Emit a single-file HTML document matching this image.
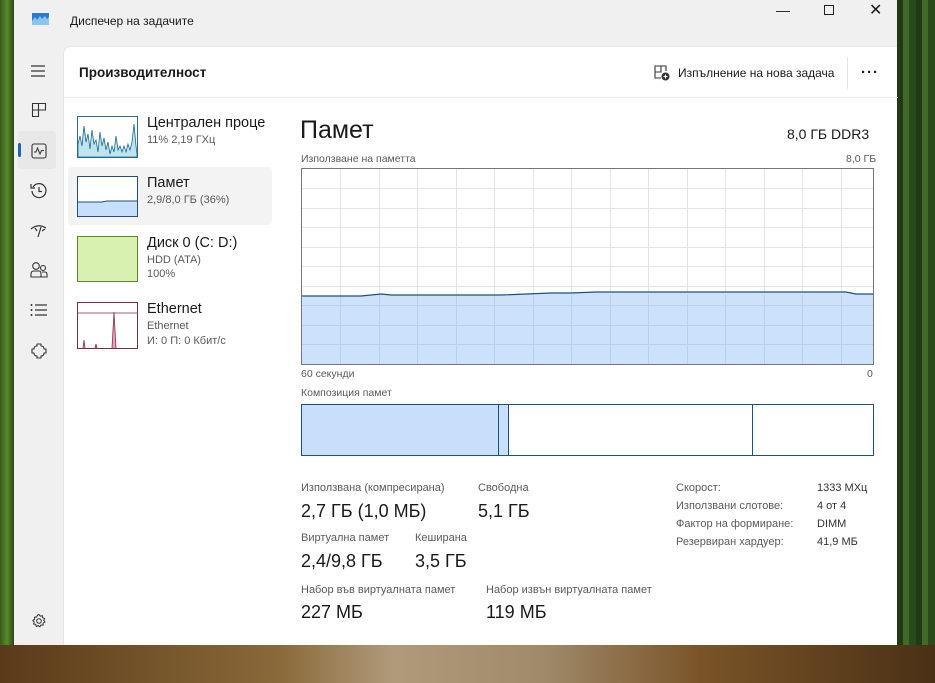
<!DOCTYPE html>
<html><head><meta charset="utf-8"><style>
*{margin:0;padding:0;box-sizing:border-box}
body{width:935px;height:683px;overflow:hidden;position:relative;font-family:"Segoe UI","Liberation Sans","DejaVu Sans",sans-serif;color:#1a1a1a;
background:linear-gradient(180deg,#2f4a1c 0%,#3d5a22 60%,#5a4320 85%,#7a5a30 100%)}
.bgr{position:absolute;left:897px;top:0;width:38px;height:683px;background:repeating-linear-gradient(90deg,#1f3a15 0 6px,#3f6a28 6px 12px,#2a4a1a 12px 19px)}
.bgl{position:absolute;left:0;top:0;width:14px;height:683px;background:linear-gradient(90deg,#355a1f,#5a8a2a,#2b4a18)}
.bgb{position:absolute;left:0;top:645px;width:935px;height:38px;background:linear-gradient(90deg,#5a3a18 0%,#8a6a3a 30%,#b09a7a 42%,#a08a6a 58%,#7a5428 75%,#4a3015 100%)}
.win{position:absolute;left:14px;top:0;width:883px;height:645px;background:#f0f0f0}
.t{position:absolute;white-space:nowrap}
.card{position:absolute;left:49px;top:46px;width:834px;height:599px;background:#fff;border-top-left-radius:8px;border:1px solid #e5e5e5;border-right:none;border-bottom:none}
.nav svg{position:absolute}
.s{font-size:11px;color:#5a5a5a}
.b{font-size:18px;color:#1a1a1a}
.r{font-size:11px;color:#333}
</style></head><body>
<div class="bgl"></div><div class="bgr"></div><div class="bgb"></div>
<div class="win">
 <svg style="position:absolute;left:18px;top:13px" width="17" height="12"><rect width="17" height="12" fill="#2b7ad0"/><path d="M0 8 L3 4 L5 7 L8 3 L10 6 L13 3 L15 6 L17 4 V12 H0Z" fill="#8cc4f0"/></svg>
 <div class="t" style="left:56px;top:14px;font-size:12px">Диспечер на задачите</div>
 <div class="t" style="left:762px;top:2px;font-size:14px">&#8212;</div>
 <div style="position:absolute;left:810px;top:5px;width:10px;height:10px;border:1px solid #222"></div>
 <div class="t" style="left:855px;top:0px;font-size:16px;font-weight:300">✕</div>
 <div class="nav">
  <svg style="left:16px;top:64px" width="16" height="14"><path d="M1 2H15M1 7H15M1 12H15" stroke="#333" stroke-width="1.2"/></svg>
  <svg style="left:17px;top:102px" width="16" height="16"><path d="M1.5 1.5H7.5V14.5H1.5ZM1.5 8H14.5V1.5H7.5M7.5 8V14.5" fill="none" stroke="#333" stroke-width="1.1"/></svg>
  <div style="position:absolute;left:4px;top:131px;width:38px;height:38px;background:#e8e8e8;border-radius:4px"></div>
  <div style="position:absolute;left:4px;top:143px;width:3px;height:14px;background:#1b65b5;border-radius:2px"></div>
  <svg style="left:17px;top:143px" width="16" height="16"><rect x="1" y="1" width="14" height="14" rx="2" fill="none" stroke="#333" stroke-width="1.1"/><path d="M3 9H5L6.5 5L9 11L10.5 7.5H13" fill="none" stroke="#333" stroke-width="1"/></svg>
  <svg style="left:16px;top:182px" width="18" height="18"><path d="M3 5A7 7 0 1 1 2 9" fill="none" stroke="#333" stroke-width="1.2"/><path d="M1 2V6H5" fill="none" stroke="#333" stroke-width="1.2"/><path d="M9 5V9.5H12" fill="none" stroke="#333" stroke-width="1.2"/></svg>
  <svg style="left:16px;top:222px" width="18" height="16"><path d="M1 7Q8 1 16 6M8 15L11 5M5 6L7 9M12 9L15 7" fill="none" stroke="#333" stroke-width="1.2"/></svg>
  <svg style="left:16px;top:261px" width="18" height="18"><circle cx="6" cy="5" r="3.3" fill="none" stroke="#333" stroke-width="1.1"/><circle cx="13" cy="7" r="2.5" fill="none" stroke="#333" stroke-width="1.1"/><path d="M1 16V13Q1 10 4 10H9Q11 10 11 13V16ZM12 11H15Q17 11 17 13.5V16H11" fill="none" stroke="#333" stroke-width="1.1"/></svg>
  <svg style="left:16px;top:303px" width="18" height="14"><path d="M5 2H17M5 7H17M5 12H17" stroke="#333" stroke-width="1.2"/><circle cx="1.5" cy="2" r="1" fill="#333"/><circle cx="1.5" cy="7" r="1" fill="#333"/><circle cx="1.5" cy="12" r="1" fill="#333"/></svg>
  <svg style="left:16px;top:342px" width="18" height="18"><path d="M7 2H11V4Q14 4 14 7H16V11H14Q14 14 11 14V16H7V14Q4 14 4 11H2V7H4Q4 4 7 4Z" fill="none" stroke="#333" stroke-width="1.1" stroke-linejoin="round"/></svg>
  <svg style="left:17px;top:613px" width="16" height="16"><circle cx="8" cy="8" r="2.3" fill="none" stroke="#333" stroke-width="1"/><path d="M8 1.5L9.3 3.2 11.3 2.6 11.6 4.7 13.6 5.4 12.8 7.4 14 9 12.2 10 12.1 12.1 10 12 8.9 13.8 7.2 12.6 5.3 13.5 4.7 11.4 2.6 11 3.2 9 1.8 7.4 3.6 6.3 3.5 4.2 5.6 4 6.5 2.1Z" fill="none" stroke="#333" stroke-width="1"/></svg>
 </div>
 <div class="card">
  <div class="t" style="left:15px;top:18px;font-size:13.5px;font-weight:bold;color:#1a1a1a">Производителност</div>
  <svg style="position:absolute;left:590px;top:18px" width="16" height="16"><path d="M1 1H7V7H1ZM7 1H12V6M1 7V13H7" fill="none" stroke="#333" stroke-width="1.1"/><circle cx="11.5" cy="11.5" r="4" fill="#333"/><path d="M11.5 9.5V13.5M9.5 11.5H13.5" stroke="#fff" stroke-width="1.1"/></svg>
  <div class="t" style="left:614px;top:19px;font-size:12px;color:#1a1a1a">Изпълнение на нова задача</div>
  <div style="position:absolute;left:783px;top:10px;width:1px;height:32px;background:#e5e5e5"></div>
  <div class="t" style="left:797px;top:17px;font-size:15px;font-weight:bold;letter-spacing:1px">···</div>
  <div style="position:absolute;left:0;top:50px;width:834px;height:1px;background:#ebebeb"></div>
  <svg style="position:absolute;left:13px;top:69px" width="61" height="42"><rect x=".5" y=".5" width="60" height="41" fill="#fff" stroke="#2a6f8a"/><path d="M1 41V28L3 20 5 30 7 10 9 26 11 18 13 33 15 14 17 28 19 24 21 36 23 16 25 30 27 22 29 34 31 26 33 38 35 30 37 36 39 20 41 34 43 30 45 36 47 30 49 36 51 28 53 34 55 26 57 8 59 30 60 38V41Z" fill="#bfe3ef" stroke="#1c6a8c" stroke-width=".8"/></svg>
  <div class="t" style="left:83px;top:68px;font-size:14.5px">Централен проце</div>
  <div class="t s" style="left:83px;top:87px">11% 2,19 ГХц</div>
  <div style="position:absolute;left:4px;top:120px;width:204px;height:58px;background:#f3f3f3;border-radius:4px"></div>
  <svg style="position:absolute;left:13px;top:129px" width="61" height="41"><rect x=".5" y=".5" width="60" height="40" fill="#fff" stroke="#1f4f7a"/><path d="M1 26H25L30 25H60V40H1Z" fill="#c7dffa"/><path d="M1 26H25L30 25H60" fill="none" stroke="#1f4f7a"/></svg>
  <div class="t" style="left:83px;top:128px;font-size:14.5px">Памет</div>
  <div class="t s" style="left:83px;top:147px">2,9/8,0 ГБ (36%)</div>
  <div style="position:absolute;left:13px;top:189px;width:61px;height:46px;background:#d8f0b0;border:1px solid #5a8a2a"></div>
  <div class="t" style="left:83px;top:188px;font-size:14.5px">Диск 0 (C: D:)</div>
  <div class="t s" style="left:83px;top:207px">HDD (ATA)</div>
  <div class="t s" style="left:83px;top:221px">100%</div>
  <svg style="position:absolute;left:13px;top:255px" width="61" height="47"><rect x=".5" y=".5" width="60" height="46" fill="#fff" stroke="#7a2a4a"/><path d="M1 11H60" stroke="#8a2a52" stroke-width=".8"/><path d="M6 46L7 38 8 46M18 46L19 42 20 46M35 46L37 10 39 46" fill="#e8a0b8" stroke="#8a2a52" stroke-width=".8"/></svg>
  <div class="t" style="left:83px;top:254px;font-size:14.5px">Ethernet</div>
  <div class="t s" style="left:83px;top:273px">Ethernet</div>
  <div class="t s" style="left:83px;top:288px">И: 0 П: 0 Кбит/с</div>
  <div class="t" style="left:236px;top:69px;font-size:25px;font-weight:300">Памет</div>
  <div class="t" style="left:723px;top:79px;font-size:14px">8,0 ГБ DDR3</div>
  <div class="t s" style="left:237px;top:106px;font-size:10.5px">Използване на паметта</div>
  <div class="t s" style="left:782px;top:106px;font-size:10.5px">8,0 ГБ</div>
  <svg style="position:absolute;left:237px;top:121px" width="573" height="197">
   <rect x=".5" y=".5" width="572" height="196" fill="#fff"/>
   <g stroke="#e4e4e4" stroke-width="1">
    <path d="M39.5 0V197M78.5 0V197M116.5 0V197M155.5 0V197M193.5 0V197M232.5 0V197M270.5 0V197M309.5 0V197M347.5 0V197M386.5 0V197M424.5 0V197M463.5 0V197M501.5 0V197M540.5 0V197"/>
    <path d="M0 20.5H573M0 40.5H573M0 59.5H573M0 79.5H573M0 98.5H573M0 118.5H573M0 137.5H573M0 157.5H573M0 176.5H573"/>
   </g>
   <path d="M0 128H60L80 126L90 127H200L250 125H270L295 124H545L555 126H573V197H0Z" fill="#c7dffa" fill-opacity=".9"/>
   <g stroke="#b8d0ec" stroke-width="1"><path d="M39.5 127V197M78.5 127V197M116.5 127V197M155.5 127V197M193.5 127V197M232.5 127V197M270.5 127V197M309.5 127V197M347.5 127V197M386.5 127V197M424.5 127V197M463.5 127V197M501.5 127V197M540.5 127V197M0 137.5H573M0 157.5H573M0 176.5H573"/></g>
   <path d="M0 128H60L80 126L90 127H200L250 125H270L295 124H545L555 126H573" fill="none" stroke="#1f4f7a" stroke-width="1.2"/>
   <rect x=".5" y=".5" width="572" height="196" fill="none" stroke="#777"/>
  </svg>
  <div class="t s" style="left:237px;top:321px;font-size:10.5px">60 секунди</div>
  <div class="t s" style="left:803px;top:321px;font-size:10.5px">0</div>
  <div class="t s" style="left:237px;top:340px;font-size:10.5px">Композиция памет</div>
  <svg style="position:absolute;left:237px;top:357px" width="573" height="53">
   <rect x=".5" y=".5" width="572" height="51" fill="#fff" stroke="#1f4f7a"/>
   <rect x=".5" y=".5" width="197" height="51" fill="#c7dffa" stroke="#1f4f7a"/>
   <rect x="197.5" y=".5" width="10" height="51" fill="#c7dffa" stroke="#1f4f7a"/>
   <path d="M451.5 0V52" stroke="#1f4f7a"/>
  </svg>
  <div class="t s" style="left:237px;top:435px">Използвана (компресирана)</div>
  <div class="t b" style="left:237px;top:454px">2,7 ГБ (1,0 МБ)</div>
  <div class="t s" style="left:414px;top:435px">Свободна</div>
  <div class="t b" style="left:414px;top:454px">5,1 ГБ</div>
  <div class="t s" style="left:237px;top:485px">Виртуална памет</div>
  <div class="t b" style="left:237px;top:504px">2,4/9,8 ГБ</div>
  <div class="t s" style="left:351px;top:485px">Кеширана</div>
  <div class="t b" style="left:351px;top:504px">3,5 ГБ</div>
  <div class="t s" style="left:237px;top:537px">Набор във виртуалната памет</div>
  <div class="t b" style="left:237px;top:555px">227 МБ</div>
  <div class="t s" style="left:422px;top:537px">Набор извън виртуалната памет</div>
  <div class="t b" style="left:422px;top:555px">119 МБ</div>
  <div class="t s" style="left:612px;top:435px">Скорост:</div>
  <div class="t s" style="left:612px;top:453px">Използвани слотове:</div>
  <div class="t s" style="left:612px;top:471px">Фактор на формиране:</div>
  <div class="t s" style="left:612px;top:489px">Резервиран хардуер:</div>
  <div class="t r" style="left:753px;top:435px">1333 MXц</div>
  <div class="t r" style="left:753px;top:453px">4 от 4</div>
  <div class="t r" style="left:753px;top:471px">DIMM</div>
  <div class="t r" style="left:753px;top:489px">41,9 МБ</div>
 </div>
</div>
</body></html>
